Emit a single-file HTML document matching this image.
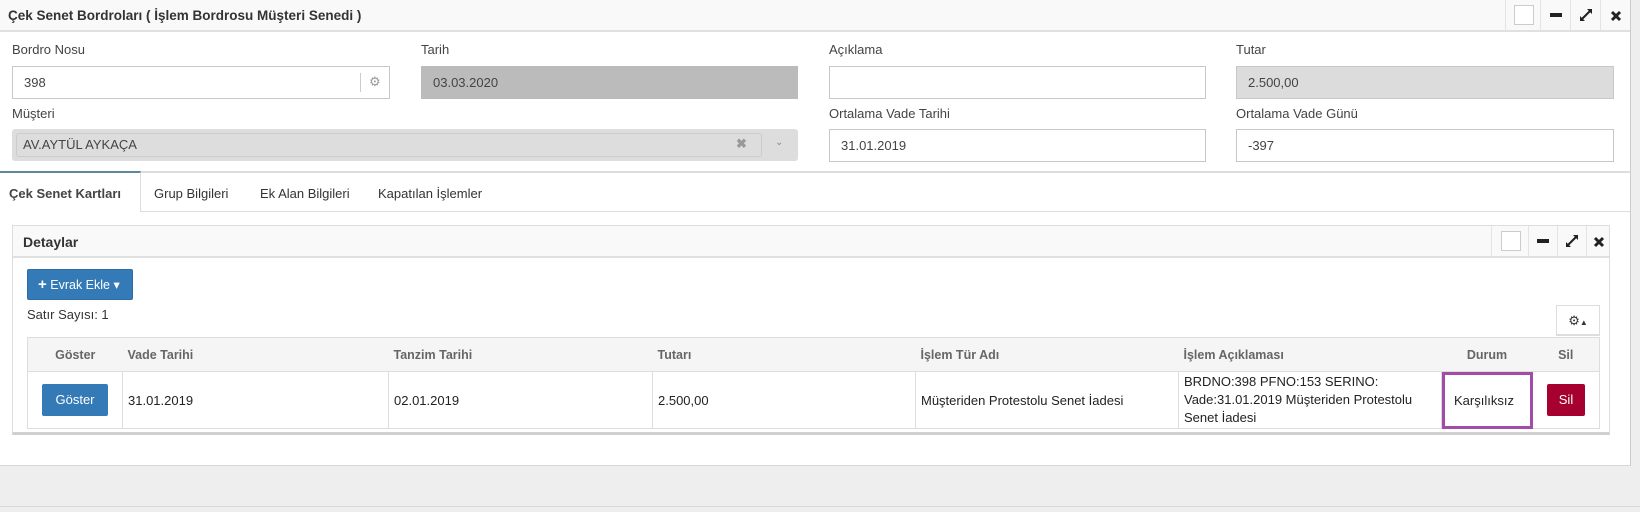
<!DOCTYPE html>
<html><head><meta charset="utf-8"><style>
*{box-sizing:border-box;margin:0;padding:0}
body{width:1640px;height:512px;overflow:hidden;background:#eeeeee;font-family:"Liberation Sans",sans-serif;font-size:13px;color:#333;position:relative}
.abs{position:absolute}
.main{left:0;top:0;width:1631px;height:466px;background:#fff;border-right:1px solid #ccc;border-bottom:1px solid #d6d6d6}
.hdr{left:0;top:0;width:1630px;height:32px;background:#f9f9f9;border-bottom:2px solid #e0e0e0}
.ctl{top:0;height:31px;border-left:1px solid #e3e3e3}
.lbl{font-size:13px;color:#444}
.inp{height:33px;border:1px solid #c8c8c8;background:#fff;padding:0 11px;line-height:31px;font-size:13px;color:#444}
.dis{background:#dcdcdc}
th{font-weight:bold;color:#666;font-size:12.5px;text-align:left;background:#f5f5f5;height:34px;padding:0 5px;border-bottom:1px solid #ddd}
td{border-left:1px solid #ddd;height:57px;padding:0 5px;font-size:13px;color:#222;vertical-align:middle}
table{border-collapse:collapse}
</style></head><body>
<div class="abs main"></div>
<div class="abs hdr"></div>
<div class="abs" style="left:8px;top:8px;font-weight:bold;font-size:13.5px;color:#333">Çek Senet Bordroları ( İşlem Bordrosu Müşteri Senedi )</div>
<div class="abs ctl" style="left:1505px;width:35px"><div class="abs" style="left:8px;top:5px;width:20px;height:20px;border:1px solid #ccc;background:#fff"></div></div>
<div class="abs ctl" style="left:1540px;width:30px"><div class="abs" style="left:9px;top:13px;width:12px;height:4px;background:#222"></div></div>
<div class="abs ctl" style="left:1570px;width:30px"><svg class="abs" style="left:8px;top:8px" width="14" height="14" viewBox="0 0 14 14"><path d="M2 12 L12 2" stroke="#222" stroke-width="2"/><path d="M8 1h5v5z M1 8v5h5z" fill="#222"/></svg></div>
<div class="abs ctl" style="left:1600px;width:30px"><svg class="abs" style="left:9px;top:10px" width="12" height="12" viewBox="0 0 12 12"><path d="M2 2L10 10M10 2L2 10" stroke="#222" stroke-width="3"/></svg></div>

<div class="abs lbl" style="left:12px;top:42px">Bordro Nosu</div>
<div class="abs lbl" style="left:421px;top:42px">Tarih</div>
<div class="abs lbl" style="left:829px;top:42px">Açıklama</div>
<div class="abs lbl" style="left:1236px;top:42px">Tutar</div>
<div class="abs inp" style="left:12px;top:66px;width:378px">398</div>
<div class="abs" style="left:360px;top:73px;width:1px;height:19px;background:#ccc"></div>
<div class="abs" style="left:369px;top:74px;color:#999;font-size:13px">⚙</div>
<div class="abs inp" style="left:421px;top:66px;width:377px;background:#bbb;border-color:#bbb">03.03.2020</div>
<div class="abs inp" style="left:829px;top:66px;width:377px"></div>
<div class="abs inp dis" style="left:1236px;top:66px;width:378px">2.500,00</div>

<div class="abs lbl" style="left:12px;top:106px">Müşteri</div>
<div class="abs lbl" style="left:829px;top:106px">Ortalama Vade Tarihi</div>
<div class="abs lbl" style="left:1236px;top:106px">Ortalama Vade Günü</div>
<div class="abs" style="left:12px;top:129px;width:786px;height:32px;background:#ddd;border-radius:3px"></div>
<div class="abs" style="left:16px;top:133px;width:746px;height:24px;border:1px solid #ccc;border-radius:3px;padding-left:6px;line-height:22px;color:#444">AV.AYTÜL AYKAÇA</div>
<div class="abs" style="left:736px;top:136px;color:#999;font-weight:bold">✖</div>
<div class="abs" style="left:775px;top:137px;color:#888;font-size:10px">⌄</div>
<div class="abs inp" style="left:829px;top:129px;width:377px">31.01.2019</div>
<div class="abs inp" style="left:1236px;top:129px;width:378px">-397</div>

<div class="abs" style="left:0;top:171px;width:1630px;height:2px;background:#ddd"></div>
<div class="abs" style="left:0;top:211px;width:1630px;height:1px;background:#ddd"></div>
<div class="abs" style="left:0;top:171px;width:141px;height:41px;background:#fff;border-top:2px solid #5c8799;border-right:1px solid #ddd"></div>
<div class="abs" style="left:9px;top:186px;font-weight:bold;color:#444">Çek Senet Kartları</div>
<div class="abs" style="left:154px;top:186px;color:#333">Grup Bilgileri</div>
<div class="abs" style="left:260px;top:186px;color:#333">Ek Alan Bilgileri</div>
<div class="abs" style="left:378px;top:186px;color:#333">Kapatılan İşlemler</div>

<div class="abs" style="left:12px;top:225px;width:1598px;height:210px;border:1px solid #ddd;border-bottom:3px solid #d0d0d0;background:#fff"></div>
<div class="abs" style="left:13px;top:226px;width:1596px;height:32px;background:#f9f9f9;border-bottom:2px solid #e0e0e0"></div>
<div class="abs" style="left:23px;top:234px;font-weight:bold;font-size:14px;color:#333">Detaylar</div>
<div class="abs ctl" style="left:1491px;top:226px;width:37px"><div class="abs" style="left:9px;top:5px;width:20px;height:20px;border:1px solid #ccc;background:#fff"></div></div>
<div class="abs ctl" style="left:1528px;top:226px;width:29px"><div class="abs" style="left:8px;top:13px;width:12px;height:4px;background:#222"></div></div>
<div class="abs ctl" style="left:1557px;top:226px;width:29px"><svg class="abs" style="left:7px;top:8px" width="14" height="14" viewBox="0 0 14 14"><path d="M2 12 L12 2" stroke="#222" stroke-width="2"/><path d="M8 1h5v5z M1 8v5h5z" fill="#222"/></svg></div>
<div class="abs ctl" style="left:1586px;top:226px;width:24px"><svg class="abs" style="left:6px;top:10px" width="12" height="12" viewBox="0 0 12 12"><path d="M2 2L10 10M10 2L2 10" stroke="#222" stroke-width="3"/></svg></div>

<div class="abs" style="left:27px;top:269px;width:106px;height:31px;background:#337ab7;border:1px solid #2e6da4;border-radius:2px;color:#fff;font-size:12.5px;line-height:29px;padding-left:10px"><b style="font-size:15px">+</b> Evrak Ekle ▾</div>
<div class="abs" style="left:27px;top:307px;color:#333">Satır Sayısı: 1</div>
<div class="abs" style="left:1556px;top:305px;width:44px;height:31px;border:1px solid #ddd;border-bottom:2px solid #ddd;background:#fff;text-align:center;line-height:29px;font-size:13px;color:#333">⚙<span style="font-size:8px">▲</span></div>

<table class="abs" style="left:27px;top:337px;width:1573px;border:1px solid #ddd">
<tr><th style="width:95px;text-align:center">Göster</th><th style="width:266px">Vade Tarihi</th><th style="width:264px">Tanzim Tarihi</th><th style="width:263px">Tutarı</th><th style="width:263px">İşlem Tür Adı</th><th style="width:263px">İşlem Açıklaması</th><th style="width:91px;text-align:center">Durum</th><th style="text-align:center">Sil</th></tr>
<tr><td style="text-align:center"><span style="display:inline-block;width:66px;height:32px;background:#337ab7;border-radius:2px;color:#fff;line-height:32px">Göster</span></td>
<td>31.01.2019</td><td>02.01.2019</td><td>2.500,00</td><td>Müşteriden Protestolu Senet İadesi</td>
<td style="line-height:18px">BRDNO:398 PFNO:153 SERINO:<br>Vade:31.01.2019 Müşteriden Protestolu<br>Senet İadesi</td>
<td style="outline:3px solid #a24ba8;outline-offset:-3px;padding-left:12px">Karşılıksız</td>
<td style="text-align:center"><span style="display:inline-block;width:38px;height:32px;background:#a50030;border-radius:2px;color:#fff;line-height:32px">Sil</span></td></tr>
</table>
<div class="abs" style="left:0;top:506px;width:1640px;height:1px;background:#d8d8d8"></div>
</body></html>
